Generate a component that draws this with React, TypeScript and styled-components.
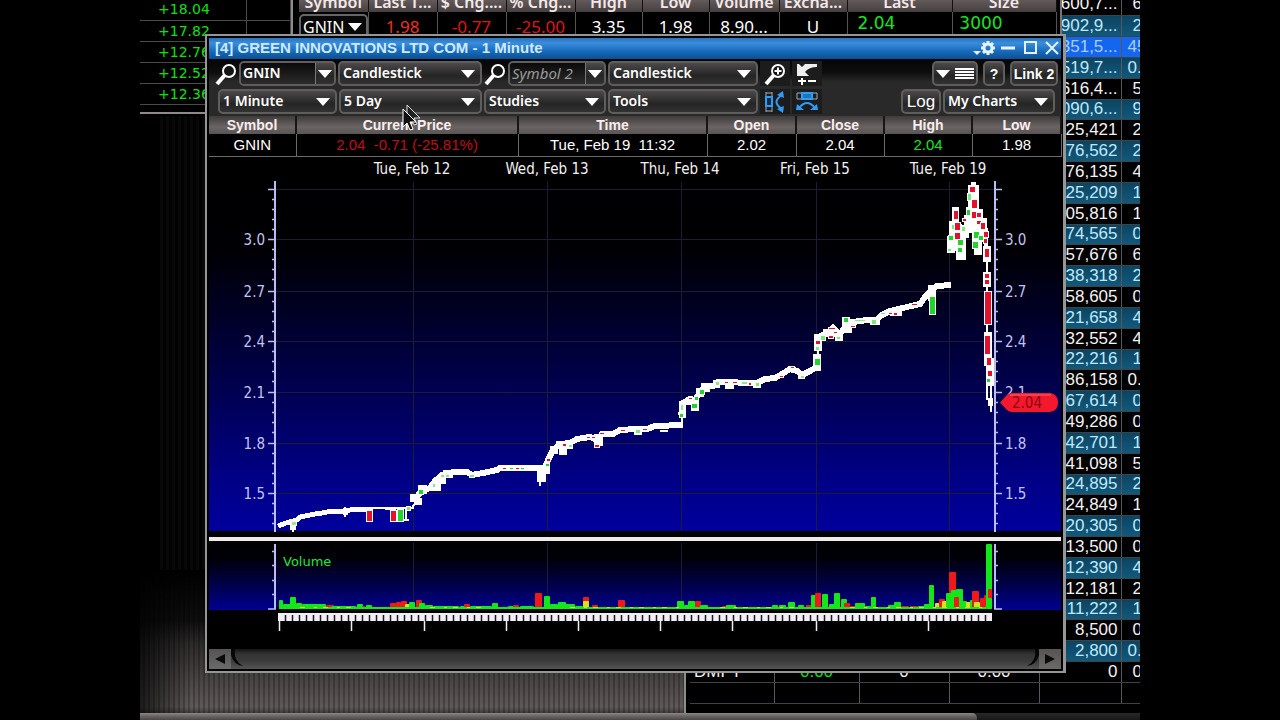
import React from 'react';
import styled, { createGlobalStyle } from 'styled-components';

const GlobalStyle = createGlobalStyle`
  * { box-sizing: border-box; }
  body { margin: 0; background: #000; color: #fff; font-family: "Liberation Sans", Arial, sans-serif; overflow: hidden; }
  button, input, select { font: inherit; color: inherit; margin: 0; }
  table { border-collapse: collapse; border-spacing: 0; table-layout: fixed; }
  th, td { padding: 0; font-weight: 400; }
`;

const Desktop = styled.main`
  position: relative;
  margin: 0 140px;
  height: 100vh;
  min-height: 720px;
  overflow: hidden;
  background: #000;
`;

/* ---------- windows behind the chart ---------- */

const TexturedPanel = styled.div`
  position: absolute;
  left: 0;
  top: 570px;
  width: 544px;
  height: 144px;
  background:
    linear-gradient(90deg, rgba(0, 0, 0, 0.7), rgba(0, 0, 0, 0) 50px),
    linear-gradient(#000 0%, rgba(0, 0, 0, 0.85) 35%, rgba(0, 0, 0, 0.55) 52%, rgba(0, 0, 0, 0.05) 95%, rgba(0, 0, 0, 0.4) 100%),
    repeating-linear-gradient(90deg, #645d5d 0 3px, #4c4747 3px 5px);
`;

const SideShade = styled.div`
  position: absolute;
  left: 20px;
  top: 116px;
  width: 46px;
  height: 460px;
  background: repeating-linear-gradient(90deg, #080808 0 3px, #020202 3px 6px);
`;

const MoversWindow = styled.section`
  position: absolute;
  left: 0;
  top: -1px;
  width: 153px;
  height: 115px;
  border-right: 2px solid #8f8b8b;
  border-bottom: 2px solid #8f8b8b;
`;

const MoversTable = styled.table`
  width: 151px;
  tr { height: 21px; }
  td {
    border-bottom: 1px solid #4a4a4a;
    border-right: 1px solid #4a4a4a;
    font: 14px/20px "DejaVu Sans", sans-serif;
    color: #10e010;
    padding-left: 18px;
    white-space: nowrap;
  }
`;

const QuoteWindow = styled.section`
  position: absolute;
  left: 153px;
  right: 78px;
  top: -9px;
  height: 48px;
  padding: 0 4px 0 6px;
  border-right: 2px solid #777;
  background: #000;
  overflow: hidden;
`;

const QuoteTable = styled.table`
  width: 100%;
  th {
    height: 21px;
    background: linear-gradient(#7a7070, #453f3f);
    border-right: 1px solid #111;
    font: 600 16px/20px "Noto Sans", sans-serif;
    color: #f4e8e8;
    white-space: nowrap;
    overflow: hidden;
  }
  td {
    height: 30px;
    border-right: 1px solid #555;
    text-align: center;
    font: 17px/26px "Noto Sans", sans-serif;
  }
  td:nth-child(n + 9) {
    padding-right: 46px;
    font: 17px/22px "DejaVu Sans", sans-serif;
    vertical-align: top;
  }
`;

const Tone = styled.span<{ $c: string }>`
  color: ${p => p.$c};
`;

const MiniCombo = styled.div`
  display: flex;
  align-items: center;
  justify-content: space-between;
  height: 26px;
  border: 2px solid #666;
  border-radius: 5px;
  background: #080808;
  padding: 0 4px 0 2px;
  font: 16px/20px "Noto Sans", sans-serif;
`;

const TapeWindow = styled.section`
  position: absolute;
  right: 0;
  top: -6px;
  width: 456px;
  height: 720px;
  border-left: 2px solid #8f8b8b;
  padding-left: 4px;
  background: #000;
`;

const TapeTable = styled.table`
  width: 450px;
  font: 17px/18px "Liberation Sans", Arial, sans-serif;
`;

const tapeTones = {
  dark: 'background: #000; color: #f6f2f2;',
  teal: 'background: linear-gradient(#0b4360, #13587a); color: #bfe9fb;',
  lit: 'background: #1566ee; color: #a9cdfb;',
};

const TapeRow = styled.tr<{ $tone: keyof typeof tapeTones }>`
  height: 21px;
  &:nth-child(6n) { height: 20px; }
  ${p => tapeTones[p.$tone]}
  td { border-bottom: 1px solid #3d4448; border-right: 1px solid #54595c; text-align: center; white-space: nowrap; }
  td:nth-child(1) { text-align: left; padding-left: 4px; }
  td:nth-child(5) { text-align: right; padding-right: 3px; }
`;

const ClippedCell = styled.td<{ $wide: boolean }>`
  && { text-align: left; padding-left: ${p => (p.$wide ? 6 : 11)}px; overflow: hidden; border-right: 0; }
`;

const BottomScroll = styled.div`
  position: absolute;
  left: 0;
  right: 0;
  top: 713px;
  height: 7px;
  background: linear-gradient(#2a2828, #181818);
`;

const BottomThumb = styled.div`
  width: 837px;
  height: 7px;
  border-radius: 0 5px 0 0;
  background: linear-gradient(#8d8787, #6d6868 40%, #4a4646);
`;

/* ---------- chart window ---------- */

const ChartWindow = styled.section`
  position: absolute;
  left: 65px;
  right: 74px;
  top: 34px;
  border: 2px solid #979696;
  border-right-width: 3px;
  padding: 2px;
  background: #000;
`;

const TitleBar = styled.header`
  display: flex;
  align-items: center;
  justify-content: space-between;
  height: 21px;
  padding: 0 0 1px 6px;
  background: linear-gradient(#2a74bd, #3a8ddd 25%, #1669b8 65%, #0c4f94);
`;

const Title = styled.h1`
  margin: 0;
  font: 700 15px/20px "Liberation Sans", Arial, sans-serif;
  color: #cfeaff;
  white-space: nowrap;
`;

const WindowButtons = styled.div`
  display: flex;
  align-items: center;
`;

const GlyphButton = styled.button<{ $w: number }>`
  display: flex;
  align-items: center;
  justify-content: center;
  width: ${p => p.$w}px;
  height: 20px;
  padding: 0;
  border: 0;
  background: none;
`;

const Toolbars = styled.div`
  display: flex;
  flex-direction: column;
  gap: 3px;
  height: 57px;
  padding: 2px 3px 0 6px;
  background: linear-gradient(#050505, #0e0e0e 24%, #2a2929 40%, #2a2929);
`;

const ToolRow = styled.div`
  display: flex;
  align-items: center;
  gap: 2px;
  height: 25px;
`;

const Spacer = styled.div<{ $w?: number }>`
  ${p => (p.$w ? `width: ${p.$w}px;` : 'flex: 1;')}
`;

const frame = `
  height: 25px;
  border: 2px solid #605d5d;
  border-radius: 5px;
  background: linear-gradient(#4b4949, #262525 60%, #333232);
`;

const Arrow = styled.i`
  display: block;
  border: 7px solid transparent;
  border-top: 8px solid #fff;
  border-bottom: 0;
`;

const SelectBox = styled.label<{ $w: number }>`
  ${frame}
  display: flex;
  align-items: center;
  width: ${p => p.$w}px;
  padding-right: 5px;
`;

const Select = styled.select`
  appearance: none;
  flex: 1;
  min-width: 0;
  padding: 0 0 2px 3px;
  border: 0;
  outline: 0;
  background: none;
  font: 600 14px/20px "Noto Sans", sans-serif;
  color: #fff;
`;

const ComboBox = styled.div<{ $w: number }>`
  ${frame}
  display: flex;
  width: ${p => p.$w}px;
  overflow: hidden;
`;

const ComboInput = styled.input<{ $hint?: boolean }>`
  flex: 1;
  min-width: 0;
  height: 21px;
  padding: 0 2px 2px;
  border: 0;
  border-right: 1px solid #777;
  outline: 0;
  background: linear-gradient(#0a0a0a, #2c2b2b);
  font: ${p => (p.$hint ? 'italic 400 15px/18px' : '600 14px/18px')} "Noto Sans", sans-serif;
  &::placeholder { color: #9a9a9a; opacity: 1; }
`;

const ComboButton = styled.button`
  display: flex;
  align-items: center;
  justify-content: center;
  width: 18px;
  height: 21px;
  padding: 0;
  border: 0;
  background: none;
`;

const PushButton = styled.button<{ $w: number }>`
  ${frame}
  display: flex;
  align-items: center;
  justify-content: center;
  gap: 5px;
  width: ${p => p.$w}px;
  padding: 0;
  font: 600 14px/20px "Liberation Sans", Arial, sans-serif;
  white-space: nowrap;
`;

const IconButton = styled.button`
  display: flex;
  align-items: center;
  justify-content: center;
  width: 30px;
  height: 25px;
  padding: 0;
  border: 0;
  background: #1c1c1c;
`;

const LogButton = styled(PushButton)`
  font: 400 17px/20px "Liberation Sans", Arial, sans-serif;
`;

const InfoTable = styled.table`
  width: 100%;
  th {
    height: 18px;
    border-right: 2px solid #171515;
    background: linear-gradient(#3f3b3b, #6a6464 60%, #5a5555);
    font: 600 14px/16px "Liberation Sans", Arial, sans-serif;
    color: #fbeeee;
  }
  td {
    height: 22px;
    border-right: 1px solid #6a6a6a;
    border-bottom: 1px solid #6a6a6a;
    text-align: center;
    font: 15px/20px "Liberation Sans", Arial, sans-serif;
    white-space: pre;
  }
`;

const Drawing = styled.svg`
  display: block;
  width: 100%;
  height: auto;
`;

const Divider = styled.div`
  height: 4px;
  background: #efe9ee;
`;

const ScrollBar = styled.div`
  display: flex;
  height: 20px;
  background: linear-gradient(#141414, #343333 25%, #3c3b3b 60%, #565555);
`;

const ScrollButton = styled.button`
  display: flex;
  align-items: center;
  justify-content: center;
  width: 22px;
  height: 20px;
  padding: 0;
  border: 0;
  background: linear-gradient(#565353, #6c6969);
`;

const Hook = styled.svg`
  display: block;
`;

const Pointer = styled.svg`
  position: absolute;
  left: 262px;
  top: 103px;
`;

/* ---------- data ---------- */

const movers = ['+18.04', '+17.82', '+12.76', '+12.52', '+12.36'];

const tape: [string, string][] = [
  ['600,7...', '6'], ['902,9...', '2'], ['351,5...', '45'], ['519,7...', '0.'], ['616,4...', '5'], ['090,6...', '9'],
  ['25,421', '2'], ['76,562', '2'], ['76,135', '4'], ['25,209', '1'], ['05,816', '1'], ['74,565', '0'], ['57,676', '6'],
  ['38,318', '2'], ['58,605', '0'], ['21,658', '4'], ['32,552', '4'], ['22,216', '1'], ['86,158', '0.'], ['67,614', '0'],
  ['49,286', '0'], ['42,701', '1'], ['41,098', '5'], ['24,895', '2'], ['24,849', '1'], ['20,305', '0'], ['13,500', '0'],
  ['12,390', '4'], ['12,181', '2'], ['11,222', '1'], ['8,500', '0'], ['2,800', '0.'], ['0', '0'],
];

const days: [string, number][] = [
  ['Tue, Feb 12', 412], ['Wed, Feb 13', 547], ['Thu, Feb 14', 680], ['Fri, Feb 15', 815], ['Tue, Feb 19', 948],
];
const gridX = [413, 547, 681, 816, 949];
const levels: [string, number][] = [['', 189], ['3.0', 239], ['2.7', 291], ['2.4', 341], ['2.1', 392], ['1.8', 443], ['1.5', 493]];

const priceLine =
  '278,526 286,523 297,520 300,517 315,514 322,513 332,511 345,512 350,510 357,509 373,509';
const priceLine2 =
  '413,500 417,497 421,491 430,488 435,481 442,475 453,472 467,472 472,475 483,473 497,470 500,468 545,468 548,460 553,450 560,444 570,443 577,439 590,437 597,440 602,434 613,434 620,430 637,429 647,429 655,426 683,425';
const priceLine3 =
  '681,415 683,403 690,399 695,400 700,392 705,387 713,386 718,382 733,382 743,383 757,383 765,379 775,378 782,374 790,369 797,371 802,375 810,371 817,367 817,357';
const priceLine4 =
  '817,347 819,337 827,333 833,328 840,334 845,327 847,322 853,322 867,320 875,321 882,315 890,311 907,307 920,304 925,297 933,289 937,286 951,285';

// x, y, width, height of the soft white clumps around the line
const clumps: number[][] = [
  [290, 519, 6, 11], [343, 508, 5, 7], [410, 494, 9, 8], [414, 498, 8, 7], [418, 485, 9, 9], [432, 479, 9, 12],
  [438, 474, 8, 10], [443, 470, 10, 8], [537, 468, 9, 14], [545, 458, 5, 16], [550, 446, 8, 8], [556, 441, 17, 8], [559, 447, 8, 8],
  [594, 434, 9, 12], [634, 428, 8, 7], [679, 401, 7, 17], [686, 397, 6, 8], [691, 400, 8, 11], [696, 388, 8, 9], [701, 383, 9, 9],
  [713, 380, 7, 8], [725, 380, 9, 9], [753, 381, 8, 7], [798, 373, 7, 6], [813, 354, 8, 17], [814, 334, 8, 17], [823, 329, 14, 8],
  [835, 332, 8, 9], [842, 317, 8, 8], [843, 323, 9, 10], [870, 317, 10, 8], [890, 309, 12, 7], [928, 285, 8, 16],
  [952, 207, 7, 22], [949, 221, 8, 18], [947, 236, 8, 17], [953, 224, 9, 27], [956, 238, 10, 22], [961, 225, 8, 13],
  [964, 215, 8, 18], [966, 207, 6, 14], [968, 185, 11, 36], [971, 182, 5, 10], [972, 209, 7, 34], [974, 229, 8, 26],
  [976, 209, 7, 27], [980, 218, 7, 24], [984, 228, 4, 20], [983, 246, 8, 16], [983, 272, 8, 15], [984, 332, 8, 34],
  [986, 358, 8, 28], [988, 398, 5, 8],
];

const R = '#e5102c';
const G = '#1fd42a';
const bodies: [number, number, number, number, string][] = [
  [292, 522, 4, 3, '#9bea8f'], [367, 511, 5, 10, R], [391, 511, 5, 10, R], [398, 510, 5, 11, G], [407, 507, 3, 3, '#7de87a'],
  [419, 490, 4, 4, G], [433, 484, 2, 3, '#8fe68a'], [441, 475, 3, 2, '#8fe68a'], [446, 475, 3, 2, '#8fe68a'], [470, 475, 4, 2, '#7de87a'],
  [503, 468, 3, 1, R], [510, 468, 3, 1, G], [516, 468, 3, 1, R], [521, 468, 3, 1, G], [547, 459, 3, 2, R], [546, 464, 3, 2, G],
  [563, 444, 3, 2, R], [569, 445, 3, 2, '#8fe68a'], [587, 437, 3, 1, R], [592, 437, 3, 1, R], [595, 445, 4, 2, R], [600, 433, 4, 1, R],
  [621, 430, 4, 1, R], [636, 430, 4, 3, '#7de87a'], [643, 429, 4, 1, R], [680, 414, 3, 3, G], [681, 405, 2, 5, '#9be895'], [689, 398, 3, 1, R],
  [692, 404, 5, 4, G], [695, 397, 3, 3, G], [700, 390, 4, 4, G], [716, 382, 3, 3, '#8fe68a'], [725, 382, 3, 1, R], [733, 382, 4, 1, R],
  [742, 382, 5, 2, '#8fe68a'], [749, 383, 2, 2, R], [756, 383, 3, 3, '#7de87a'], [780, 376, 3, 1, R], [791, 367, 3, 1, R], [801, 376, 3, 2, '#8fe68a'],
  [815, 359, 5, 6, G], [816, 347, 3, 3, '#7de87a'], [816, 341, 4, 3, R], [821, 336, 4, 4, '#7de87a'], [829, 328, 6, 1, R], [834, 332, 3, 1, R],
  [829, 336, 4, 2, R], [837, 337, 3, 2, '#7de87a'], [844, 318, 4, 4, G], [851, 326, 4, 1, R], [855, 320, 10, 1, '#8fe68a'], [872, 320, 4, 4, '#7de87a'],
  [881, 313, 4, 1, '#8fe68a'], [889, 313, 3, 1, R], [894, 313, 3, 2, R], [912, 304, 5, 1, R], [930, 297, 5, 17, G],
  [954, 211, 4, 8, R], [952, 225, 4, 4, '#7de87a'], [949, 236, 4, 4, G], [948, 249, 3, 2, '#7de87a'], [955, 223, 5, 7, R], [955, 233, 5, 6, R],
  [958, 240, 5, 5, G], [958, 248, 4, 4, G], [962, 227, 3, 4, '#7de87a'], [963, 219, 3, 2, R], [967, 210, 3, 5, G], [968, 194, 3, 6, '#7de87a'],
  [970, 187, 5, 5, R], [972, 200, 5, 8, R], [972, 212, 4, 6, R], [977, 213, 4, 4, R], [974, 232, 5, 6, G], [973, 242, 5, 6, G],
  [977, 221, 4, 3, R], [981, 223, 4, 6, R], [979, 236, 4, 4, G], [984, 232, 4, 5, R], [984, 239, 3, 4, R], [985, 249, 4, 8, R],
  [985, 274, 4, 4, R], [985, 280, 4, 4, R], [985, 292, 6, 32, R], [985, 336, 5, 18, R], [987, 358, 4, 7, R], [988, 371, 4, 5, R], [987, 379, 3, 3, G],
];

const VG = '#14e61c';
const VR = '#f01818';
const VY = '#d8e020';
// x, height, width, colour of each volume bar
const volume: [number, number, number, string][] = [
  [279, 9, 4, VG], [283, 5, 8, VG], [290, 12, 6, VG], [296, 6, 6, VG], [302, 5, 24, VG], [326, 4, 8, VR], [332, 3, 24, VG], [357, 5, 6, VG],
  [362, 3, 3, VR], [366, 4, 6, VG], [372, 2, 18, VG], [390, 6, 6, VR], [396, 7, 5, VR], [401, 8, 6, VR], [405, 5, 6, VY], [409, 7, 6, VG],
  [416, 9, 6, VR], [419, 6, 6, VG], [425, 4, 8, VG], [433, 3, 26, VG], [460, 3, 6, VG], [464, 5, 6, VR], [470, 3, 22, VG], [492, 6, 6, VG],
  [500, 2, 8, VR], [508, 3, 10, VG], [513, 4, 6, VR], [520, 3, 14, VG], [535, 16, 7, VR], [544, 13, 6, VG], [550, 5, 8, VG], [558, 7, 8, VG],
  [565, 5, 10, VG], [575, 3, 8, VG], [583, 12, 6, VR], [583, 8, 6, VY], [592, 4, 6, VR], [598, 2, 20, VG], [618, 9, 7, VR], [626, 2, 24, VG],
  [650, 2, 26, VG], [677, 8, 7, VG], [684, 4, 5, VG], [688, 8, 7, VG], [695, 8, 6, VR], [700, 4, 8, VG], [708, 2, 12, VG], [722, 3, 6, VR],
  [726, 4, 10, VG], [736, 2, 36, VG], [772, 4, 6, VG], [779, 4, 7, VG], [788, 7, 7, VG], [798, 4, 6, VG], [806, 4, 8, VR], [811, 14, 5, VG],
  [815, 16, 6, VR], [822, 15, 6, VG], [829, 5, 6, VG], [834, 16, 6, VG], [841, 10, 6, VG], [844, 6, 6, VR], [850, 3, 6, VR], [855, 6, 10, VG],
  [865, 3, 6, VG], [871, 12, 5, VG], [878, 2, 12, VG], [888, 4, 8, VG], [894, 7, 7, VG], [901, 3, 8, VR], [910, 3, 8, VR], [918, 3, 8, VG],
  [924, 5, 6, VG], [929, 24, 5, VG], [935, 6, 5, VY], [939, 10, 6, VR], [942, 8, 5, VY], [949, 37, 7, VR], [946, 16, 6, VG], [951, 19, 6, VG],
  [956, 20, 7, VG], [954, 12, 5, VR], [960, 8, 7, VG], [966, 7, 5, VY], [970, 9, 7, VG], [972, 18, 7, VR], [974, 7, 6, VY], [980, 11, 5, VR],
  [984, 14, 5, VR], [986, 65, 6, VG], [988, 20, 4, VR], [987, 11, 5, VG],
];

/* ---------- pieces ---------- */

const Magnifier = ({ plus }: { plus?: boolean }) => (
  <svg width="22" height="24" viewBox="0 0 22 24" fill="none" stroke="#fff" aria-hidden="true">
    <circle cx="14" cy="9" r="6" strokeWidth="2" fill="#141414" />
    <path d="M9.5 13.5L2 22" strokeWidth="4" />
    {plus && <path d="M14 5.500v7M10.500 9h7" strokeWidth="2" />}
  </svg>
);

const Dropdown = ({ name, value, w }: { name: string; value: string; w: number }) => (
  <SelectBox $w={w}>
    <Select aria-label={name} defaultValue={value}><option>{value}</option></Select>
    <Arrow />
  </SelectBox>
);

const Combo = ({ name, w, value, hint }: { name: string; w: number; value?: string; hint?: string }) => (
  <ComboBox $w={w}>
    <ComboInput aria-label={name} defaultValue={value} placeholder={hint} $hint={!!hint} />
    <ComboButton aria-label={`${name} list`}><Arrow /></ComboButton>
  </ComboBox>
);

const axisFont = { fontFamily: '"DejaVu Sans Condensed", "DejaVu Sans", sans-serif' };

const PriceChart = () => (
  <Drawing viewBox="209 157 852 380" role="img" aria-label="GNIN price">
    <defs>
      <linearGradient id="night" x1="0" y1="0" x2="0" y2="1">
        <stop offset="0" stopColor="#000" />
        <stop offset="0.25" stopColor="#000004" />
        <stop offset="0.42" stopColor="#000026" />
        <stop offset="0.65" stopColor="#000056" />
        <stop offset="0.85" stopColor="#000084" />
        <stop offset="1" stopColor="#00009c" />
      </linearGradient>
    </defs>
    <rect x="209" y="157" width="852" height="374" fill="url(#night)" />
    <g fill="#f2f2f2" fontSize="15" textAnchor="middle" style={axisFont}>
      {days.map(([d, x]) => <text key={d + x} x={x} y="174">{d}</text>)}
    </g>
    <g stroke="#1c1c38" strokeWidth="1">
      {gridX.map(x => <path key={x} d={`M${x}.500 182V531`} />)}
      {levels.map(([, y]) => <path key={y} d={`M276 ${y}.500H994`} />)}
    </g>
    <g stroke="#bcbcf4" fill="none">
      <path d="M275 181V532M995 181V532" strokeWidth="2" />
      {levels.map(([, y]) => (
        <path
          key={y}
          strokeWidth="1.500"
          d={`M268 ${y}.500h7M995 ${y}.500h7` + [10, 20, 30, 40].filter(o => y + o < 531).map(o => `M272 ${y + o}.500h3M995 ${y + o}.500h3`).join('')}
        />
      ))}
    </g>
    <g fill="#c4c4f2" fontSize="15" style={axisFont}>
      {levels.map(([t, y]) => t && <text key={t} x="265" y={y + 6} textAnchor="end">{t}</text>)}
      {levels.map(([t, y]) => t && <text key={t} x="1005" y={y + 6}>{t}</text>)}
    </g>
    <g stroke="#fff" fill="none" strokeWidth="5" shapeRendering="crispEdges">
      <polyline points={priceLine} />
      {[priceLine2, priceLine3, priceLine4].map(p => <polyline key={p} points={p} strokeWidth="6" />)}
      <path strokeWidth="2" d="M370 507.500H414M385 509H396M681.500 412V426M817.500 350V356M987 258V400M991 380V412M540 478V486M293 526V532M345 507V517M404 520H409M406 508V520M660 431H668M412 507L417 502" />
    </g>
    <g fill="#fff" shapeRendering="crispEdges">
      {clumps.map(([x, y, w, h], i) => <rect key={i} x={x} y={y} width={w} height={h} rx="1" />)}
    </g>
    <g stroke="#fff" strokeWidth="2" paintOrder="stroke" shapeRendering="crispEdges">
      {bodies.map(([x, y, w, h, c], i) => <rect key={i} x={x} y={y} width={w} height={h} fill={c} />)}
    </g>
    <path d="M1000 402.500L1007 395Q1009 393 1012 393H1050Q1058 394 1058 402.500T1050 412H1012Q1009 412 1007 410Z" fill="#f3182c" />
    <path d="M1010 395H1051" stroke="#ff6670" strokeWidth="1" />
    <text x="1012" y="408" fontSize="15" fill="#8a0610" style={axisFont}>2.04</text>
  </Drawing>
);

const VolumeChart = () => {
  const ticks = Array.from({ length: 102 }, (_, i) => 285 + i * 7).filter(x => x < 992);
  return (
    <Drawing viewBox="209 541 852 108" role="img" aria-label="GNIN volume">
      <defs>
        <linearGradient id="dusk" x1="0" y1="0" x2="0" y2="1">
          <stop offset="0" stopColor="#000" />
          <stop offset="0.25" stopColor="#000008" />
          <stop offset="0.6" stopColor="#000044" />
          <stop offset="1" stopColor="#000090" />
        </linearGradient>
      </defs>
      <rect x="209" y="541" width="852" height="69" fill="url(#dusk)" />
      <g stroke="#1c1c38">{gridX.map(x => <path key={x} d={`M${x}.500 543V608`} />)}</g>
      <g stroke="#bcbcf4" fill="none">
        <path d="M275 544V609M995 544V609" strokeWidth="2" />
        <path d="M272 551.500h3m-3 14h3m-3 15h3m-3 14h3M268 609h8M995 551.500h3m-3 14h3m-3 15h3m-3 14h3M994 609h8" strokeWidth="1.500" />
      </g>
      <text x="283" y="566" fontSize="13" fill="#20e838" style={{ fontFamily: '"DejaVu Sans", sans-serif' }}>Volume</text>
      <rect x="276" y="607" width="718" height="6" fill="#000" />
      {volume.map(([x, h, w, c], i) => <rect key={i} x={x} y={609 - h} width={w} height={h} rx="1" fill={c} />)}
      <path d="M279 608H986" stroke={VG} strokeWidth="2" />
      <path d="M300 607.500H360M430 607.500H490M570 607.500H680M720 607.500H800M850 607.500H984" stroke={VY} strokeDasharray="5 9 3 6" />
      <rect x="278" y="613" width="714" height="8" fill="#f3eef6" />
      <path d={ticks.map(x => `M${x}.500 615V621`).join('')} stroke="#1a1a1a" strokeWidth="1.500" />
      <path d={[279, 351, 424, 506, 578, 660, 732, 816, 928].map(x => `M${x}.500 621V631`).join('')} stroke="#f3eef6" strokeWidth="1.500" />
    </Drawing>
  );
};

const blue = '#2f9bf5';

export default function App() {
  return (
    <>
      <GlobalStyle />
      <Desktop>
        <SideShade />
        <TexturedPanel />
        <MoversWindow>
          <MoversTable>
            <colgroup><col style={{ width: 106 }} /><col /></colgroup>
            <tbody>{movers.map(m => <tr key={m}><td>{m}</td><td /></tr>)}</tbody>
          </MoversTable>
        </MoversWindow>
        <TapeWindow>
          <TapeTable>
            <colgroup>{[84, 85, 90, 90, 82, 19].map((w, i) => <col key={i} style={{ width: w }} />)}</colgroup>
            <tbody>
              {tape.map(([a, b], i) => {
                const last = i === tape.length - 1;
                return (
                  <TapeRow key={i} $tone={i === 2 ? 'lit' : i % 2 ? 'teal' : 'dark'}>
                    <td>{last && 'DMFY'}</td>
                    <td>{last && <Tone $c="#10e010">0.00</Tone>}</td>
                    <td>{last && '0'}</td>
                    <td>{last && '0.00'}</td>
                    <td>{a}</td>
                    <ClippedCell $wide={b.length > 1}>{b}</ClippedCell>
                  </TapeRow>
                );
              })}
              <TapeRow $tone="dark"><td /><td /><td /><td /><td /><ClippedCell $wide={false} /></TapeRow>
            </tbody>
          </TapeTable>
        </TapeWindow>
        <BottomScroll><BottomThumb /></BottomScroll>
        <QuoteWindow>
          <QuoteTable>
            <colgroup>{[69, 69, 69, 69, 67, 67, 70, 68, 105, 104].map((w, i) => <col key={i} style={{ width: w }} />)}</colgroup>
            <thead>
              <tr>{['Symbol', 'Last T...', '$ Chg....', '% Chg...', 'High', 'Low', 'Volume', 'Excha...', 'Last', 'Size'].map((h, i) => <th key={i}>{h}</th>)}</tr>
            </thead>
            <tbody>
              <tr>
                <td><MiniCombo>GNIN<Arrow /></MiniCombo></td>
                <td><Tone $c="#f0301c">1.98</Tone></td>
                <td><Tone $c="#e01414">-0.77</Tone></td>
                <td><Tone $c="#e01414">-25.00</Tone></td>
                <td>3.35</td><td>1.98</td><td>8.90...</td><td>U</td>
                <td><Tone $c="#10e820">2.04</Tone></td>
                <td><Tone $c="#10e820">3000</Tone></td>
              </tr>
            </tbody>
          </QuoteTable>
        </QuoteWindow>

        <ChartWindow>
          <TitleBar>
            <Title>[4] GREEN INNOVATIONS LTD COM - 1 Minute</Title>
            <WindowButtons>
              <GlyphButton $w={24} aria-label="Settings">
                <svg width="24" height="20" viewBox="0 0 24 20">
                  <path d="M0 13h8l-4 4z" fill="#e4f3ff" />
                  <g transform="translate(15 10)">
                    <circle r="4" fill="none" stroke="#e4f3ff" strokeWidth="3" />
                    <path d="M0-7v3M0 4v3M-7 0h3M4 0h3M-5-5l2 2M3 3l2 2M-5 5l2-2M3-3l2-2" stroke="#e4f3ff" strokeWidth="3" />
                  </g>
                </svg>
              </GlyphButton>
              <GlyphButton $w={22} aria-label="Minimize"><svg width="14" height="14"><path d="M0 7h14" stroke="#e4f3ff" strokeWidth="3" /></svg></GlyphButton>
              <GlyphButton $w={24} aria-label="Maximize"><svg width="14" height="14"><rect x="1" y="1" width="11" height="11" fill="none" stroke="#e4f3ff" strokeWidth="2" /></svg></GlyphButton>
              <GlyphButton $w={18} aria-label="Close"><svg width="14" height="14"><path d="M1 1l12 12M13 1L1 13" stroke="#e4f3ff" strokeWidth="2" /></svg></GlyphButton>
            </WindowButtons>
          </TitleBar>

          <Toolbars>
            <ToolRow>
              <Magnifier />
              <Combo name="Symbol" w={97} value="GNIN" />
              <Dropdown name="Chart style" value="Candlestick" w={144} />
              <Magnifier />
              <Combo name="Second symbol" w={98} hint="Symbol 2" />
              <Dropdown name="Second chart style" value="Candlestick" w={150} />
              <IconButton aria-label="Zoom in"><Magnifier plus /></IconButton>
              <IconButton aria-label="Reset zoom">
                <svg width="24" height="24" viewBox="0 0 24 24">
                  <path d="M2 2v12h12l-4-4q4-5 12-5V2H10L7 5 4 2z" fill="#eee" />
                  <path d="M3 19h8M7 16v7M13 19h8" stroke="#fff" strokeWidth="2" />
                </svg>
              </IconButton>
              <Spacer />
              <PushButton $w={46} aria-label="Layout">
                <Arrow />
                <svg width="19" height="12"><path d="M0 1h19M0 4h19M0 7h19M0 10h19" stroke="#fff" strokeWidth="2" /></svg>
              </PushButton>
              <Spacer $w={1} />
              <PushButton $w={22}>?</PushButton>
              <Spacer $w={1} />
              <PushButton $w={48}>Link 2</PushButton>
            </ToolRow>
            <ToolRow>
              <Spacer $w={1} />
              <Dropdown name="Interval" value="1 Minute" w={119} />
              <Dropdown name="Range" value="5 Day" w={143} />
              <Dropdown name="Studies" value="Studies" w={122} />
              <Dropdown name="Tools" value="Tools" w={150} />
              <IconButton aria-label="Fit vertically">
                <svg width="22" height="22" viewBox="0 0 22 22" fill="none">
                  <path d="M2 1v20M8 1v20M2 2h6M2 20h6" stroke="#98aebb" />
                  <rect x="2" y="6" width="6" height="9" fill="#102c40" stroke={blue} strokeWidth="2" />
                  <path d="M18 4Q7 11 18 18" stroke={blue} strokeWidth="2" />
                  <path d="M13 4l6-4 1 7zM13 18l7-3-1 7z" fill={blue} />
                </svg>
              </IconButton>
              <IconButton aria-label="Fit horizontally">
                <svg width="22" height="22" viewBox="0 0 22 22" fill="none">
                  <path d="M1 2v6M21 2v6M1 2h20M1 8h20" stroke="#98aebb" />
                  <rect x="6" y="2" width="10" height="6" fill="#1f74b8" stroke={blue} strokeWidth="2" />
                  <path d="M3 17Q11 7 19 17" stroke={blue} strokeWidth="2" />
                  <path d="M0 19l1-6 7 6zM22 19l-1-6-7 6z" fill={blue} />
                </svg>
              </IconButton>
              <Spacer />
              <LogButton $w={40}>Log</LogButton>
              <Dropdown name="Saved charts" value="My Charts" w={112} />
              <Spacer $w={1} />
            </ToolRow>
          </Toolbars>

          <InfoTable>
            <colgroup>{[87, 222, 189, 89, 88, 88, 89].map((w, i) => <col key={i} style={{ width: w }} />)}</colgroup>
            <thead>
              <tr>{['Symbol', 'Current Price', 'Time', 'Open', 'Close', 'High', 'Low'].map(h => <th key={h}>{h}</th>)}</tr>
            </thead>
            <tbody>
              <tr>
                <td>GNIN</td>
                <td><Tone $c="#c00c14">2.04  -0.71 (-25.81%)</Tone></td>
                <td>Tue, Feb 19  11:32</td>
                <td>2.02</td>
                <td>2.04</td>
                <td><Tone $c="#10e820">2.04</Tone></td>
                <td>1.98</td>
              </tr>
            </tbody>
          </InfoTable>

          <PriceChart />
          <Divider />
          <VolumeChart />

          <ScrollBar>
            <ScrollButton aria-label="Scroll left"><svg width="12" height="10"><path d="M11 0v10L1 5z" fill="#0a0a0a" /></svg></ScrollButton>
            <Hook width="12" height="20"><path d="M0 0H4Q2 12 12 17Q3 16 0 6Z" fill="#050505" /></Hook>
            <Spacer />
            <Hook width="12" height="20"><path d="M12 0H8Q10 12 0 17Q9 16 12 6Z" fill="#050505" /></Hook>
            <ScrollButton aria-label="Scroll right"><svg width="12" height="10"><path d="M1 0v10l10-5z" fill="#0a0a0a" /></svg></ScrollButton>
          </ScrollBar>
        </ChartWindow>

        <Pointer width="20" height="32" viewBox="0 0 20 32">
          <path d="M5 2v18l4-4 3 6 3-1-3-6h6z" fill="#222" stroke="#ddd" />
          <path d="M1 6v18l4-4 3 7 3-1-3-7h6z" fill="#111" stroke="#fff" />
        </Pointer>
      </Desktop>
    </>
  );
}
